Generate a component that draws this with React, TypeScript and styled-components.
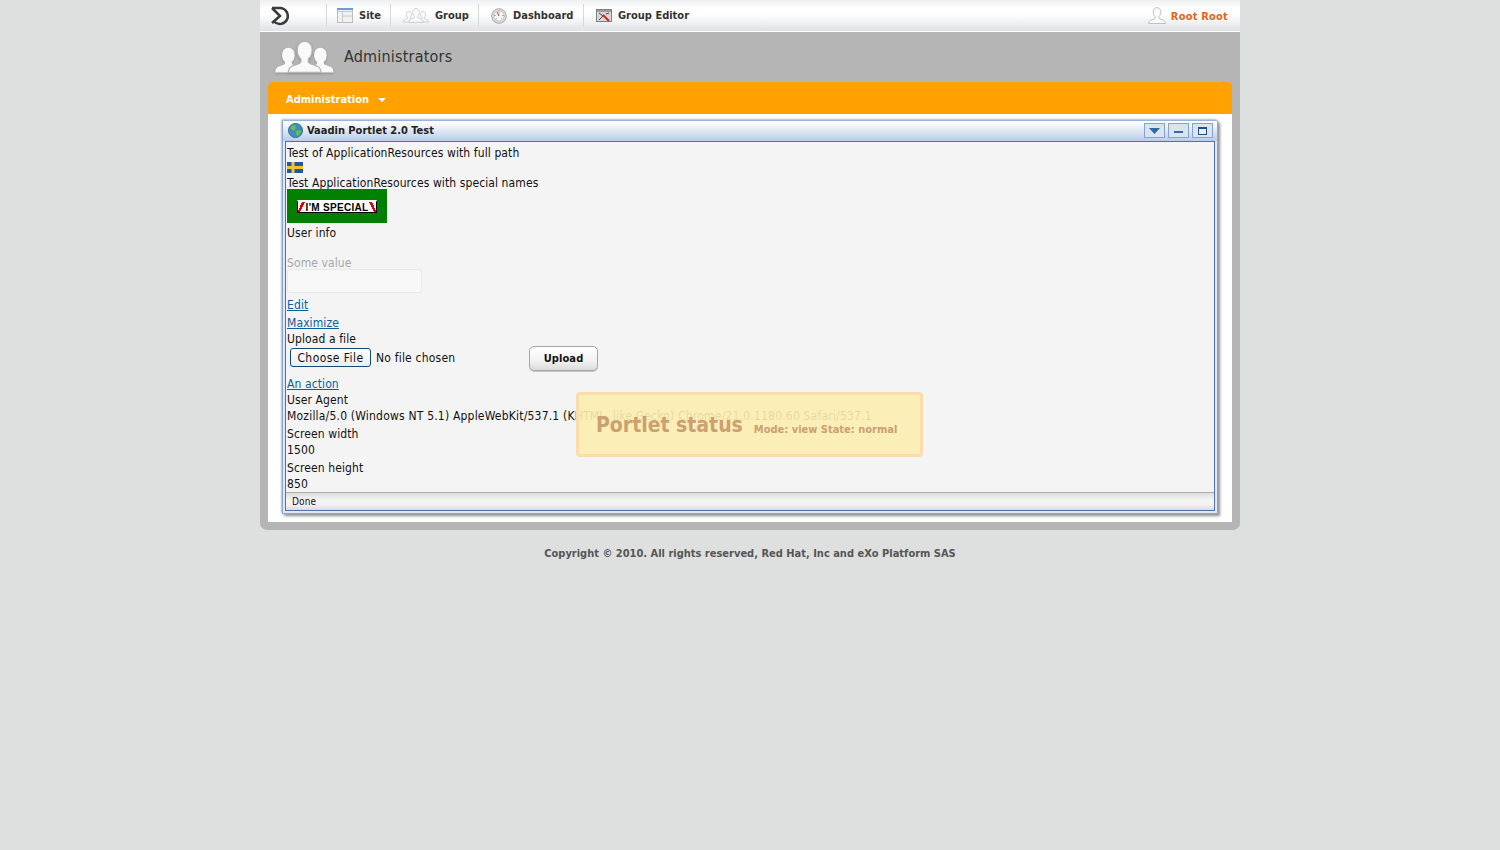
import React from "react";
import styled, { createGlobalStyle } from "styled-components";

const Global = createGlobalStyle`
  html, body {
    margin: 0;
    padding: 0;
    background: #dde0df;
    font-family: "DejaVu Sans Condensed", "DejaVu Sans", sans-serif;
    font-stretch: condensed;
  }
`;

const Page = styled.div`
  width: 980px;
  margin: 0 auto;
`;

const Toolbar = styled.div`
  height: 31px;
  border-bottom: 1px solid #fff;
  background: linear-gradient(#eef0f1 0, #fff 9px, #fff 14px, #dfe3e6 100%);
  display: flex;
  align-items: center;
  font-size: 11px;
  font-weight: bold;
  color: #333;
`;

const LogoSlot = styled.div`
  width: 66px;
  height: 31px;
  display: flex;
  align-items: center;
  padding-left: 10px;
  box-sizing: border-box;
`;

const NavItem = styled.div<{ $width: number; $pad: number }>`
  width: ${(p) => p.$width}px;
  height: 23px;
  box-sizing: border-box;
  border-left: 1px solid #d6d8d9;
  display: flex;
  align-items: center;
  gap: 6px;
  padding-left: ${(p) => p.$pad}px;
  white-space: nowrap;
`;

const UserBox = styled.div`
  margin-left: auto;
  padding-right: 12px;
  padding-top: 1px;
  display: flex;
  align-items: center;
  gap: 4px;
  letter-spacing: 0.2px;
  color: #e5641c;
`;

const Shell = styled.div`
  background: #b4b5b4;
  border-radius: 0 0 7px 7px;
  padding: 0 8px 8px;
`;

const Banner = styled.div`
  height: 50px;
  display: flex;
  align-items: center;
  gap: 10px;
  padding-left: 7px;
  font-size: 16px;
  letter-spacing: 0.2px;
  color: #333;
`;

const BannerTitle = styled.span`
  margin-top: -2px;
`;

const MenuBar = styled.div`
  height: 32px;
  box-sizing: border-box;
  padding: 2px 0 0 18px;
  background: #ffa200;
  border-radius: 5px 5px 0 0;
  display: flex;
  align-items: center;
  gap: 9px;
  font-size: 11px;
  font-weight: bold;
  color: #fff;
`;

const Caret = styled.span`
  width: 0;
  height: 0;
  margin-top: 1px;
  border-left: 4px solid transparent;
  border-right: 4px solid transparent;
  border-top: 4px solid #fff;
`;

const Sheet = styled.div`
  background: #fff;
  padding: 6px 14px 8px;
  height: 394px;
`;

const Portlet = styled.div`
  height: 394px;
  box-sizing: border-box;
  border: 1px solid #86a6dc;
  border-top-color: #9ab4e0;
  border-radius: 2px 2px 0 0;
  background: #dfe8f3;
  box-shadow: 2px 2px 3px #8f8f8f, -1px -1px 2px #bdbdbd;
  display: flex;
  flex-direction: column;
  padding: 0 2px 2px;
`;

const TitleBar = styled.div`
  height: 20px;
  box-sizing: border-box;
  margin: 0 -2px;
  flex: none;
  background: linear-gradient(#fff 0, #eef2f8 30%, #b6cde8 100%);
  display: flex;
  align-items: center;
  padding: 0 4px 2px 5px;
  gap: 4px;
  font-size: 11px;
  font-weight: bold;
  color: #222;
`;

const WinButtons = styled.div`
  margin-left: auto;
  margin-top: 1px;
  display: flex;
  gap: 3px;
`;

const WinButton = styled.div`
  width: 21px;
  height: 15px;
  box-sizing: border-box;
  border: 1px solid #7fa3dc;
  background: #dbe3ec;
  display: flex;
  align-items: center;
  justify-content: center;
`;

const Body = styled.div`
  position: relative;
  flex: 1;
  border: 1px solid #4f70b8;
  background: #f4f4f4;
  padding-left: 1px;
  display: flex;
  flex-direction: column;
  font-size: 12px;
  letter-spacing: 0.1px;
  color: #111;
`;

const Line = styled.div<{ $top?: number; $muted?: boolean; $spread?: boolean }>`
  height: 15px;
  line-height: 17px;
  margin-top: ${(p) => p.$top ?? 0}px;
  white-space: nowrap;
  letter-spacing: ${(p) => (p.$spread ? "0.2px" : "inherit")};
  color: ${(p) => (p.$muted ? "#a8a8a8" : "inherit")};
`;

const LinkText = styled.a`
  color: #0b5f9e;
  text-decoration: underline;
`;

const Flag = styled.svg`
  display: block;
  margin-top: 2px;
`;

const SpecialBox = styled.div`
  width: 100px;
  height: 34px;
  margin-top: -1px;
  background: #008000;
  display: flex;
  align-items: center;
  justify-content: center;
`;

const SpecialLabel = styled.div`
  width: 80px;
  height: 13px;
  box-sizing: border-box;
  border-top: 2px solid #fff;
  border-bottom: 1px solid #000;
  border-left: 1px solid #000;
  border-right: 1px solid #000;
  background:
    linear-gradient(115deg, #fff 0 30%, #e00000 30% 50%, #fff 50% 100%) left / 9px 100% no-repeat,
    linear-gradient(65deg, #fff 0 50%, #e00000 50% 70%, #fff 70% 100%) right / 9px 100% no-repeat,
    #fff;
  color: #000;
  font-family: "Liberation Sans", sans-serif;
  font-size: 10px;
  font-weight: bold;
  letter-spacing: 0.3px;
  line-height: 11px;
  text-align: center;
  overflow: hidden;
`;

const TextBox = styled.div`
  width: 135px;
  height: 24px;
  box-sizing: border-box;
  margin-top: -1px;
  border: 1px solid #e8e8e8;
  border-radius: 3px;
  background: #f8f8f8;
`;

const FileRow = styled.div`
  height: 24px;
  display: flex;
  align-items: center;
  padding-left: 3px;
`;

const ChooseFile = styled.div`
  width: 81px;
  height: 19px;
  box-sizing: border-box;
  margin-top: -1px;
  border: 1px solid #0e4a7c;
  border-radius: 3px;
  background: linear-gradient(#fff, #ededed);
  color: #111;
  text-align: center;
  letter-spacing: 0.45px;
  line-height: 19px;
`;

const FileName = styled.span`
  width: 153px;
  margin-left: 5px;
  letter-spacing: 0.2px;
`;

const UploadButton = styled.div`
  width: 69px;
  height: 25px;
  box-sizing: border-box;
  border: 1px solid #a6a6a6;
  border-radius: 5px;
  background: linear-gradient(#fff 0, #f4f4f4 55%, #dcdcdc 100%);
  box-shadow: 0 1px 0 #c4c4c4;
  font-size: 11px;
  font-weight: bold;
  text-align: center;
  line-height: 23px;
`;

const StatusBar = styled.div`
  margin-top: auto;
  height: 17px;
  flex: none;
  margin-left: -1px;
  border-top: 1px solid #acacac;
  background: linear-gradient(#dedede 0, #f5f5f5 45%, #f2f2f2 70%, #dadada 100%);
  font-size: 10px;
  line-height: 17px;
  padding-left: 6px;
  color: #111;
`;

const StatusOverlay = styled.div`
  position: absolute;
  left: 290px;
  top: 250px;
  width: 347px;
  height: 65px;
  box-sizing: border-box;
  border: 3px solid #fbdcaa;
  border-radius: 4px;
  background: rgba(252, 238, 176, 0.9);
  display: flex;
  align-items: flex-start;
  gap: 11px;
  padding: 17px 0 0 17px;
  color: #cca070;
  font-weight: bold;
  font-size: 11px;
  letter-spacing: 0;
  white-space: nowrap;
`;

const StatusTitle = styled.span`
  font-size: 21px;
  line-height: 27px;
`;

const StatusMeta = styled.span`
  padding-top: 11px;
`;

const Footer = styled.div`
  margin-top: 17px;
  text-align: center;
  font-size: 11px;
  font-weight: bold;
  color: #555;
`;

const PeopleSvg = styled.svg<{ $shadow?: boolean }>`
  flex: none;
  filter: ${(p) => (p.$shadow ? "drop-shadow(0 1px 1px #8a8a8a)" : "none")};
`;

const personPath =
  "M12 2c3 0 4.600 2.400 4.600 5.300 0 2.200-1 4.400-2.300 5.500v1.800c0 1 3.400 1.600 5.600 2.700 1.500.8 2.100 2 2.100 3.700H2c0-1.700.6-2.900 2.100-3.700 2.200-1.100 5.600-1.700 5.600-2.700v-1.800C8.400 11.700 7.400 9.500 7.400 7.300 7.400 4.400 9 2 12 2z";

function People(props: { width: number; height: number; fill: string; stroke: string; gap: string; shadow?: boolean }) {
  const { width, height, fill, stroke, gap, shadow } = props;
  return (
    <PeopleSvg $shadow={shadow} width={width} height={height} viewBox="0 0 60 34">
      <path d={personPath} fill={fill} stroke={stroke} transform="translate(-2 5) scale(1.28)" />
      <path d={personPath} fill={fill} stroke={stroke} transform="translate(31 5) scale(1.28)" />
      <path d={personPath} fill={fill} stroke={gap} strokeWidth="0.8" transform="translate(10 -3) scale(1.68)" />
    </PeopleSvg>
  );
}

function Logo() {
  return (
    <svg width="20" height="20" viewBox="0 0 20 20">
      <path d="M2 2h8a8 8 0 1 1-6 13.500" fill="none" stroke="#3a3a3a" strokeWidth="2.500" />
      <path d="M2 2l8 8-8 7" fill="none" stroke="#3a3a3a" strokeWidth="2.500" />
    </svg>
  );
}

function SiteIcon() {
  return (
    <svg width="16" height="15" viewBox="0 0 16 15">
      <rect x=".5" y=".5" width="15" height="14" fill="#f1f1f1" stroke="#bdbdbd" />
      <rect x="0" y="0" width="16" height="2" fill="#6f9bd6" />
      <path d="M5.500 4v11M5.500 8h10M0 3.500h16" stroke="#c8c8c8" fill="none" />
    </svg>
  );
}

function GaugeIcon() {
  return (
    <svg width="16" height="16" viewBox="0 0 17 17">
      <circle cx="8.500" cy="8.500" r="7.800" fill="#dcdad6" stroke="#a8a8a8" />
      <circle cx="8.500" cy="8.500" r="5.500" fill="#f8f8f8" stroke="#c4c4c4" />
      <path d="M8.500 8.500L6.500 4.500" stroke="#c9503c" strokeWidth="1.200" />
      <path d="M3.500 8h1.500M12 8h1.500M8.500 3.500V5M5 12l1-1M12 12l-1-1" stroke="#8a8a8a" />
    </svg>
  );
}

function EditorIcon() {
  return (
    <svg width="16" height="13" viewBox="0 0 16 13">
      <rect x=".5" y=".5" width="15" height="12" fill="#d8d8d8" stroke="#808080" />
      <path d="M1 1h14v2H1z" fill="#9c9c9c" />
      <path d="M3 4l4 3M3 11l5-5M10 5l3-1" stroke="#444" />
      <path d="M7 6l6 6" stroke="#d62020" strokeWidth="2" />
    </svg>
  );
}

function UserIcon() {
  return (
    <svg width="20" height="20" viewBox="0 0 24 24">
      <path d={personPath} fill="#fbfbfb" stroke="#b4b4b4" />
    </svg>
  );
}

function Globe() {
  return (
    <svg width="15" height="15" viewBox="0 0 15 15">
      <circle cx="7.500" cy="7.500" r="7" fill="#3c8ec4" stroke="#3c6f80" />
      <path d="M3 3l4-1 1 3-2 3-3-2zM8 8l4-1 1 2-3 4-2-2z" fill="#6cbf45" />
    </svg>
  );
}

export default function App() {
  return (
    <Page>
      <Global />
      <Toolbar>
        <LogoSlot>
          <Logo />
        </LogoSlot>
        <NavItem $width={64} $pad={10}>
          <SiteIcon />
          Site
        </NavItem>
        <NavItem $width={88} $pad={12}>
          <People width={26} height={15} fill="#fafafa" stroke="#b5b5b5" gap="#b5b5b5" />
          Group
        </NavItem>
        <NavItem $width={105} $pad={12}>
          <GaugeIcon />
          Dashboard
        </NavItem>
        <NavItem $width={120} $pad={12}>
          <EditorIcon />
          Group Editor
        </NavItem>
        <UserBox>
          <UserIcon />
          Root Root
        </UserBox>
      </Toolbar>
      <Shell>
        <Banner>
          <People width={59} height={33} fill="#f8f9f8" stroke="#f8f9f8" gap="#b4b5b4" shadow />
          <BannerTitle>Administrators</BannerTitle>
        </Banner>
        <MenuBar>
          Administration
          <Caret />
        </MenuBar>
        <Sheet>
          <Portlet>
            <TitleBar>
              <Globe />
              Vaadin Portlet 2.0 Test
              <WinButtons>
                <WinButton>
                  <svg width="11" height="6" viewBox="0 0 11 6">
                    <path d="M0 0h11L5.500 6z" fill="#2f6aa8" />
                  </svg>
                </WinButton>
                <WinButton>
                  <svg width="9" height="7" viewBox="0 0 9 7">
                    <rect y="4" width="9" height="2" fill="#2f6aa8" />
                  </svg>
                </WinButton>
                <WinButton>
                  <svg width="9" height="8" viewBox="0 0 9 8">
                    <rect x=".5" y=".5" width="8" height="7" fill="#e8eef5" stroke="#1f4f88" />
                    <rect width="9" height="2" fill="#1f4f88" />
                  </svg>
                </WinButton>
              </WinButtons>
            </TitleBar>
            <Body>
              <Line $top={3}>Test of ApplicationResources with full path</Line>
              <Flag width="16" height="11" viewBox="0 0 16 11">
                <rect width="16" height="11" fill="#1f5a9a" />
                <path d="M0 5.500h16M6 0v11" stroke="#f4c430" strokeWidth="3" />
              </Flag>
              <Line $top={2}>Test ApplicationResources with special names</Line>
              <SpecialBox>
                <SpecialLabel>I'M SPECIAL</SpecialLabel>
              </SpecialBox>
              <Line $top={2}>User info</Line>
              <Line $top={15} $muted>
                Some value
              </Line>
              <TextBox />
              <Line $top={4}>
                <LinkText>Edit</LinkText>
              </Line>
              <Line $top={3}>
                <LinkText>Maximize</LinkText>
              </Line>
              <Line $top={1}>Upload a file</Line>
              <FileRow>
                <ChooseFile>Choose File</ChooseFile>
                <FileName>No file chosen</FileName>
                <UploadButton>Upload</UploadButton>
              </FileRow>
              <Line $top={6}>
                <LinkText>An action</LinkText>
              </Line>
              <Line $top={1}>User Agent</Line>
              <Line $top={1} $spread>
                Mozilla/5.0 (Windows NT 5.1) AppleWebKit/537.1 (KHTML, like Gecko) Chrome/21.0.1180.60 Safari/537.1
              </Line>
              <Line $top={3}>Screen width</Line>
              <Line $top={1}>1500</Line>
              <Line $top={3}>Screen height</Line>
              <Line $top={1}>850</Line>
              <StatusBar>Done</StatusBar>
              <StatusOverlay>
                <StatusTitle>Portlet status</StatusTitle>
                <StatusMeta>Mode: view State: normal</StatusMeta>
              </StatusOverlay>
            </Body>
          </Portlet>
        </Sheet>
      </Shell>
      <Footer>Copyright © 2010. All rights reserved, Red Hat, Inc and eXo Platform SAS</Footer>
    </Page>
  );
}
